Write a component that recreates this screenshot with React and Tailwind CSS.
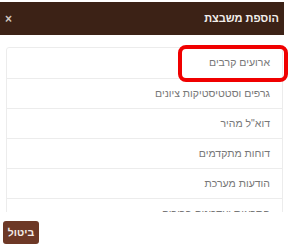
export default function App() {
  const items = [
    'ארועים קרבים',
    'גרפים וסטטיסטיקות ציונים',
    'דוא"ל מהיר',
    'דוחות מתקדמים',
    'הודעות מערכת',
    'התראות ועדכונים ברורים',
  ]

  return (
    <div className="w-[290px] h-[245px] bg-white overflow-hidden relative" style={{ fontFamily: '"Liberation Sans", Arial, sans-serif' }}>
      <div className="mt-[2px] w-[284px] h-[33px] bg-[#3c2216] flex items-center justify-between px-[5px] text-white">
        <span className="text-[12px] font-bold leading-none text-[#cfc5bf]">×</span>
        <span dir="rtl" className="text-[11px] font-bold text-[#f2eeeb]">הוספת משבצת</span>
      </div>

      <div className="mt-[12px] ml-[6px] w-[277px] h-[165px] overflow-hidden">
        <div dir="rtl" className="border border-[#ececec] rounded-t-[3px]">
          {items.map((t, i) => (
            <div key={i} className={`h-[30px] flex items-center pr-[12px] text-[10.5px] text-[#777] ${i > 0 ? 'border-t border-[#ececec]' : ''}`}>
              {t}
            </div>
          ))}
        </div>
      </div>

      <div className="mt-[9px] ml-[3px]">
        <button dir="rtl" className="w-[36px] h-[23px] rounded-[3px] bg-[#6d3826] text-[#f4ece8] text-[10.5px] font-bold flex items-center justify-center">
          ביטול
        </button>
      </div>

      <div className="absolute left-[178px] top-[45px] w-[110px] h-[37px] border-[4px] border-[#f00000] rounded-[8px]" />
    </div>
  )
}
